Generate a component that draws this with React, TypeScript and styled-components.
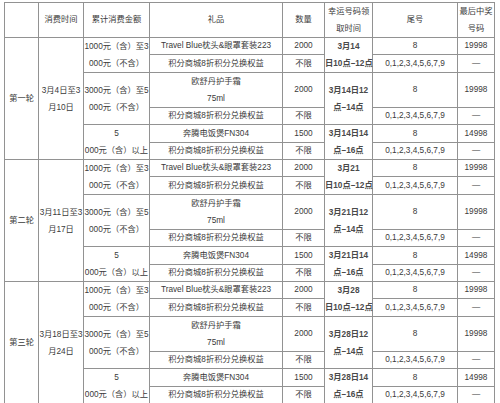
import React from "react";
import styled, { createGlobalStyle } from "styled-components";

const GlobalStyle = createGlobalStyle`
  html, body {
    margin: 0;
    padding: 0;
    background: #ffffff;
  }
  body {
    font-family: "Liberation Sans", "Noto Sans CJK SC", sans-serif;
    color: #3a3a3a;
  }
`;

const Table = styled.table`
  margin: 2px 0 0 4px;
  width: 491px;
  border-collapse: collapse;
  table-layout: fixed;
  font-size: 8.25px;
`;

const HeadRow = styled.tr`
  height: 34px;
`;

const Row = styled.tr<{ $h: number }>`
  height: ${(p) => p.$h}px;
`;

// small line-height so mixed Latin/CJK line boxes never stretch a row
const Cell = styled.td<{ $bold?: boolean }>`
  border: 1px solid #929292;
  padding: 0;
  line-height: 10px;
  text-align: center;
  vertical-align: middle;
  white-space: nowrap;
  font-weight: ${(p) => (p.$bold ? 700 : 400)};
  color: ${(p) => (p.$bold ? "#4a4a4a" : "#3a3a3a")};
`;

const HeadCell = styled(Cell).attrs({ as: "th" })`
  font-weight: 400;
`;

const Line = styled.div`
  height: 17px;
  line-height: 17px;
`;

const widths = [34, 45, 66, 133, 42, 48, 85, 37];

type Round = {
  label: string;
  period: [string, string];
  day: string;
};

const rounds: Round[] = [
  { label: "第一轮", period: ["3月4日至3", "月10日"], day: "3月14" },
  { label: "第二轮", period: ["3月11日至3", "月17日"], day: "3月21" },
  { label: "第三轮", period: ["3月18日至3", "月24日"], day: "3月28" },
];

const POINTS = "积分商城8折积分兑换权益";
const ALL_TAILS = "0,1,2,3,4,5,6,7,9";

const tiers = [
  {
    amount: ["1000元（含）至3", "000元（不含）"],
    slot: (d: string) => [d, "日10点–12点"],
    gift: ["Travel Blue枕头&眼罩套装223"],
    qty: "2000",
    last: "19998",
    heights: [17, 18],
  },
  {
    amount: ["3000元（含）至5", "000元（不含）"],
    slot: (d: string) => [`${d}日12`, "点–14点"],
    gift: ["欧舒丹护手霜", "75ml"],
    qty: "2000",
    last: "19998",
    heights: [35, 17],
  },
  {
    amount: ["5", "000元（含）以上"],
    slot: (d: string) => [`${d}日14`, "点–16点"],
    gift: ["奔腾电饭煲FN304"],
    qty: "1500",
    last: "14998",
    heights: [18, 17],
  },
];

function Lines({ items }: { items: string[] }) {
  return (
    <>
      {items.map((t) => (
        <Line key={t}>{t}</Line>
      ))}
    </>
  );
}

function RoundRows({ round }: { round: Round }) {
  return (
    <>
      {tiers.map((tier, i) => (
        <React.Fragment key={i}>
          <Row $h={tier.heights[0]}>
            {i === 0 && (
              <>
                <Cell rowSpan={6}>{round.label}</Cell>
                <Cell rowSpan={6}>
                  <Lines items={round.period} />
                </Cell>
              </>
            )}
            <Cell rowSpan={2}>
              <Lines items={tier.amount} />
            </Cell>
            <Cell>
              {tier.gift.length > 1 ? <Lines items={tier.gift} /> : tier.gift[0]}
            </Cell>
            <Cell>{tier.qty}</Cell>
            <Cell rowSpan={2} $bold>
              <Lines items={tier.slot(round.day)} />
            </Cell>
            <Cell>8</Cell>
            <Cell>{tier.last}</Cell>
          </Row>
          <Row $h={tier.heights[1]}>
            <Cell>{POINTS}</Cell>
            <Cell>不限</Cell>
            <Cell>{ALL_TAILS}</Cell>
            <Cell>—</Cell>
          </Row>
        </React.Fragment>
      ))}
    </>
  );
}

export default function App() {
  return (
    <>
      <GlobalStyle />
      <Table>
        <colgroup>
          {widths.map((w, i) => (
            <col key={i} style={{ width: w }} />
          ))}
        </colgroup>
        <thead>
          <HeadRow>
            <HeadCell />
            <HeadCell>消费时间</HeadCell>
            <HeadCell>累计消费金额</HeadCell>
            <HeadCell>礼品</HeadCell>
            <HeadCell>数量</HeadCell>
            <HeadCell>
              <Lines items={["幸运号码领", "取时间"]} />
            </HeadCell>
            <HeadCell>尾号</HeadCell>
            <HeadCell>
              <Lines items={["最后中奖", "号码"]} />
            </HeadCell>
          </HeadRow>
        </thead>
        <tbody>
          {rounds.map((r) => (
            <RoundRows key={r.label} round={r} />
          ))}
        </tbody>
      </Table>
    </>
  );
}
